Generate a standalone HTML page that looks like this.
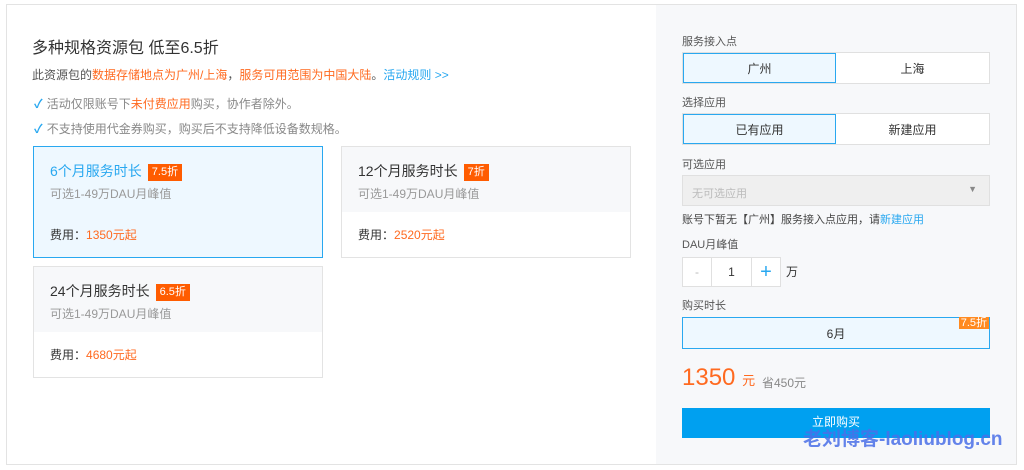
<!DOCTYPE html>
<html><head><meta charset="utf-8"><style>
*{margin:0;padding:0;box-sizing:border-box}
body{width:1024px;height:470px;background:#fff;font-family:"Liberation Sans","Noto Sans CJK SC",sans-serif;position:relative;overflow:hidden;color:#333}
.a{position:absolute;white-space:nowrap}
.frame{position:absolute;left:6px;top:4px;width:1011px;height:461px;border:1px solid #e3e3e3}
.right{position:absolute;left:656px;top:5px;width:360px;height:459px;background:#f7f8fa}
.card{position:absolute;width:290px;height:112px;border:1px solid #e3e3e3;background:#fff}
.card .top{position:absolute;left:0;top:0;right:0;height:65px;background:#f7f8fa}
.card .t{position:absolute;left:16px;top:14px;font-size:14px;color:#333}
.tag{display:inline-block;background:#ff5c00;color:#fff;font-size:11px;padding:1px 4px;margin-left:6px;line-height:15px;vertical-align:1px}
.card .s{position:absolute;left:16px;top:38px;font-size:12px;color:#999}
.card .p{position:absolute;left:16px;top:79px;font-size:12px;color:#333}
.o{color:#ff6a20}
.lbl{position:absolute;left:682px;font-size:11px;color:#555}
.seg{position:absolute;left:682px;width:308px;height:32px;border:1px solid #e0e0e0;background:#fff;display:flex;font-size:12px;color:#333}
.seg div{flex:1;display:flex;align-items:center;justify-content:center}
.seg .on{background:#eef8ff;outline:1px solid #29a8f0;outline-offset:-1px}
.chk{color:#29a8f0;font-weight:bold;margin-right:4px}
</style></head><body>
<div class="frame"></div>
<div class="right"></div>

<div class="a" style="left:32px;top:34px;font-size:16px;color:#333">多种规格资源包 低至6.5折</div>
<div class="a" style="left:32px;top:66px;font-size:12px;color:#555">此资源包的<span class="o">数据存储地点为广州/上海</span>，<span class="o">服务可用范围为中国大陆</span>。<span style="color:#29a8f0">活动规则 &gt;&gt;</span></div>
<div class="a" style="left:34px;top:95px;font-size:12px;color:#888"><span class="chk">✓</span>活动仅限账号下<span class="o">未付费应用</span>购买，协作者除外。</div>
<div class="a" style="left:34px;top:120px;font-size:12px;color:#888"><span class="chk">✓</span>不支持使用代金券购买，购买后不支持降低设备数规格。</div>

<div class="card" style="left:33px;top:146px;background:#eef8ff;border-color:#29a8f0">
<div class="t" style="color:#29a8f0">6个月服务时长<span class="tag">7.5折</span></div>
<div class="s">可选1-49万DAU月峰值</div>
<div class="p">费用：<span class="o">1350元起</span></div></div>

<div class="card" style="left:341px;top:146px"><div class="top"></div>
<div class="t">12个月服务时长<span class="tag">7折</span></div>
<div class="s">可选1-49万DAU月峰值</div>
<div class="p">费用：<span class="o">2520元起</span></div></div>

<div class="card" style="left:33px;top:266px"><div class="top"></div>
<div class="t">24个月服务时长<span class="tag">6.5折</span></div>
<div class="s">可选1-49万DAU月峰值</div>
<div class="p">费用：<span class="o">4680元起</span></div></div>

<div class="lbl" style="top:33px">服务接入点</div>
<div class="seg" style="top:52px"><div class="on">广州</div><div>上海</div></div>
<div class="lbl" style="top:94px">选择应用</div>
<div class="seg" style="top:113px"><div class="on">已有应用</div><div>新建应用</div></div>
<div class="lbl" style="top:156px">可选应用</div>
<div class="a" style="left:682px;top:175px;width:308px;height:31px;border:1px solid #e0e0e0;background:#efefef;font-size:11px;color:#bbb;padding:9px 0 0 9px">无可选应用<span style="position:absolute;right:12px;top:8px;color:#888;font-size:9px">▼</span></div>
<div class="a" style="left:682px;top:211px;font-size:11px;color:#444">账号下暂无【广州】服务接入点应用，请<span style="color:#29a8f0">新建应用</span></div>
<div class="lbl" style="top:236px">DAU月峰值</div>
<div class="a" style="left:682px;top:257px;width:99px;height:30px;border:1px solid #e0e0e0;background:#fff;display:flex;font-size:12px">
<div style="width:29px;border-right:1px solid #e0e0e0;display:flex;align-items:center;justify-content:center;color:#bbb">-</div>
<div style="width:40px;border-right:1px solid #e0e0e0;display:flex;align-items:center;justify-content:center">1</div>
<div style="flex:1;display:flex;align-items:center;justify-content:center;color:#29a8f0;font-size:20px">+</div></div>
<div class="a" style="left:786px;top:263px;font-size:12px">万</div>
<div class="lbl" style="top:297px">购买时长</div>
<div class="a" style="left:682px;top:317px;width:308px;height:32px;border:1px solid #29a8f0;background:#eef8ff;font-size:12px;display:flex;align-items:center;justify-content:center">6月<span style="position:absolute;right:0;top:-1px;background:#ff8a20;color:#fff;font-size:11px;line-height:10px;padding:1px 2px">7.5折</span></div>
<div class="a" style="left:682px;top:364px;font-size:24px;color:#ff6a20">1350 <span style="font-size:13px">元</span></div>
<div class="a" style="left:762px;top:374px;font-size:12px;color:#888">省450元</div>
<div class="a" style="left:682px;top:408px;width:308px;height:30px;background:#00a0f0;color:#fff;font-size:12px;text-align:center;line-height:29px">立即购买</div>
<div class="a" style="left:803px;top:424px;font-size:19px;font-weight:bold;color:#4a6fe8;opacity:.85">老刘博客-laoliublog.cn</div>
</body></html>
